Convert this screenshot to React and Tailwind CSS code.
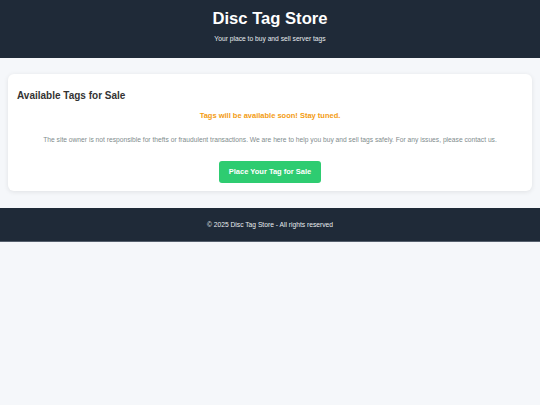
import React from "react";

const App = () => {
  return (
    <div className="min-h-[405px] bg-[#f5f7fa] font-['Liberation_Sans',Arial,sans-serif]">
      {/* Header */}
      <header className="bg-[#1f2a38] pt-[9px] pb-[15px] text-center">
        <h1 className="text-[16.6px] leading-[20px] font-bold text-white">
          Disc Tag Store
        </h1>
        <p className="mt-[6px] text-[6.7px] leading-[8px] text-[#e8ecef]">
          Your place to buy and sell server tags
        </p>
      </header>

      {/* Main */}
      <main className="px-[8px] pt-[16px] pb-[17px]">
        <div className="bg-white rounded-[6px] shadow-[0_1px_5px_rgba(0,0,0,0.09)] px-[9px] pt-[16px] pb-[8px]">
          <h2 className="text-[10px] leading-[12px] font-bold text-[#333]">
            Available Tags for Sale
          </h2>
          <p className="mt-[9px] text-center text-[7.5px] leading-[9px] font-bold text-[#f39c12]">
            Tags will be available soon! Stay tuned.
          </p>
          <p className="mt-[16px] text-center text-[6.7px] leading-[8px] text-[#7f8c8d]">
            The site owner is not responsible for thefts or fraudulent transactions. We are here to help you buy and sell tags safely. For any issues, please contact us.
          </p>
          <div className="mt-[17px] flex justify-center">
            <button className="h-[22px] px-[10px] rounded-[3px] bg-[#2ecc71] text-white text-[7.5px] font-bold">
              Place Your Tag for Sale
            </button>
          </div>
        </div>
      </main>

      {/* Footer */}
      <footer className="bg-[#1f2a38] border-b border-[#56606d] h-[34px] flex items-center justify-center">
        <p className="text-[6.7px] leading-[8px] text-[#e8ecef]">
          © 2025 Disc Tag Store - All rights reserved
        </p>
      </footer>
    </div>
  );
};

export default App;
